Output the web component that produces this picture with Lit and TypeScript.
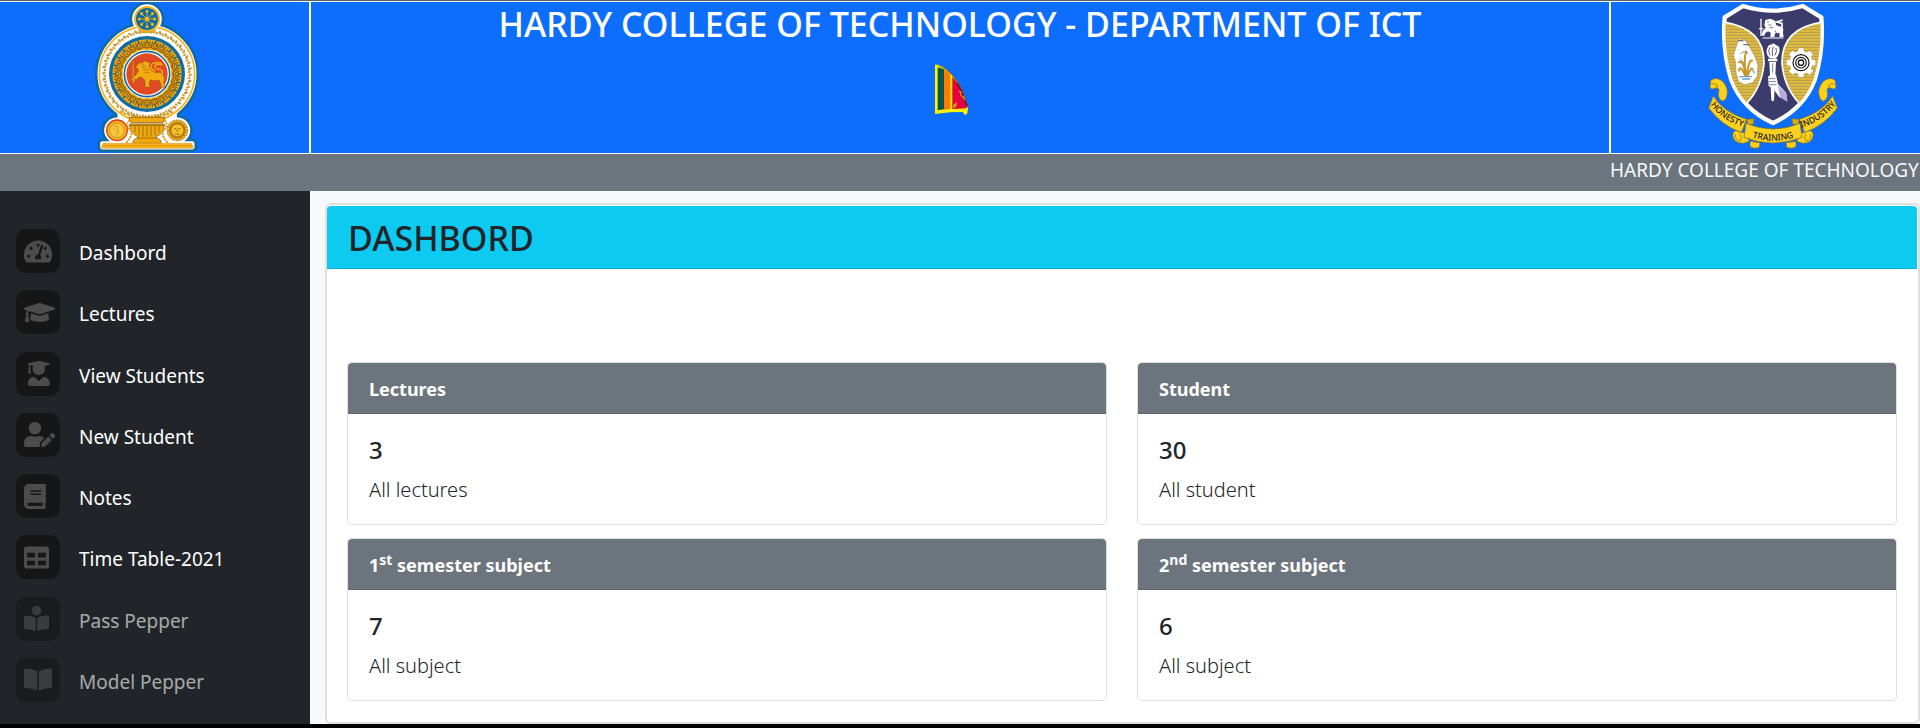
import { LitElement, html, svg, css, type TemplateResult } from "lit";
import { customElement, property } from "lit/decorators.js";
import { classMap } from "lit/directives/class-map.js";

interface NavItem {
  label: string;
  iconWidth: number;
  boxWidth?: number;
  icon: string;
  disabled?: boolean;
}

const NAV: NavItem[] = [
  {
    label: "Dashbord",
    iconWidth: 576,
    icon: "M288 32C128.94 32 0 160.94 0 320c0 52.8 14.25 102.26 39.06 144.8 5.61 9.62 16.3 15.2 27.44 15.2h443c11.14 0 21.83-5.58 27.44-15.2C561.75 422.26 576 372.8 576 320c0-159.06-128.94-288-288-288zm0 64c14.71 0 26.58 10.13 30.32 23.65-1.11 2.26-2.64 4.23-3.45 6.67l-9.22 27.67c-5.13 3.49-10.97 6.01-17.64 6.01-17.67 0-32-14.33-32-32S270.33 96 288 96zM96 384c-17.67 0-32-14.33-32-32s14.33-32 32-32 32 14.33 32 32-14.33 32-32 32zm48-160c-17.67 0-32-14.33-32-32s14.33-32 32-32 32 14.33 32 32-14.33 32-32 32zm246.77-72.41l-61.33 184C343.13 347.33 352 364.54 352 384c0 11.72-3.38 22.55-8.88 32H232.88c-5.5-9.45-8.88-20.28-8.88-32 0-33.94 26.5-61.43 59.9-63.59l61.34-184.01c4.17-12.56 17.73-19.45 30.36-15.17 12.57 4.19 19.35 17.79 15.17 30.36zm14.66 57.2l15.52-46.55c3.47-1.29 7.13-2.23 11.05-2.23 17.67 0 32 14.33 32 32s-14.33 32-32 32c-11.38-.01-20.89-6.28-26.57-15.22zM480 384c-17.67 0-32-14.33-32-32s14.33-32 32-32 32 14.33 32 32-14.33 32-32 32z",
  },
  {
    label: "Lectures",
    iconWidth: 640,
    icon: "M622.34 153.2L343.4 67.5c-15.2-4.67-31.6-4.67-46.79 0L17.66 153.2c-23.54 7.23-23.54 38.36 0 45.59l48.63 14.94c-10.67 13.19-17.23 29.28-17.88 46.9C38.78 266.15 32 276.11 32 288c0 10.78 5.68 19.85 13.86 25.65L20.33 428.53C18.11 438.52 25.71 448 35.94 448h56.11c10.24 0 17.84-9.48 15.62-19.47L82.14 313.65C90.32 307.85 96 298.78 96 288c0-11.57-6.47-21.25-15.66-26.87.76-15.02 8.44-28.3 20.69-36.72L296.6 284.5c9.06 2.78 26.44 6.25 46.79 0l278.95-85.7c23.55-7.24 23.55-38.36 0-45.6zM352.79 315.09c-28.53 8.76-52.84 3.92-65.59 0l-145.02-44.55L128 384c0 35.35 85.96 64 192 64s192-28.65 192-64l-14.18-113.47-145.03 44.56z",
  },
  {
    label: "View Students",
    iconWidth: 448,
    boxWidth: 608,
    icon: "M319.4 320.6L224 416l-95.4-95.4C57.1 323.7 0 382.2 0 454.4v9.6c0 26.5 21.5 48 48 48h352c26.5 0 48-21.5 48-48v-9.6c0-72.2-57.1-130.7-128.6-133.8zM13.6 79.8l6.4 1.5v58.4c-7 4.2-12 11.5-12 20.3 0 8.4 4.6 15.4 11.1 19.7L3.5 242c-1.7 6.9 2.1 14 7.6 14h41.8c5.5 0 9.3-7.1 7.6-14l-15.6-62.3C51.4 175.4 56 168.4 56 160c0-8.8-5-16.1-12-20.3V87.1l66 15.9c-8.6 17.2-14 36.4-14 57 0 70.7 57.3 128 128 128s128-57.3 128-128c0-20.6-5.3-39.8-14-57l96.3-23.2c18.2-4.4 18.2-27.1 0-31.5l-190.4-46c-13-3.1-26.7-3.1-39.7 0L13.6 48.2c-18.1 4.4-18.1 27.2 0 31.6z",
  },
  {
    label: "New Student",
    iconWidth: 640,
    icon: "M224 256c70.7 0 128-57.3 128-128S294.7 0 224 0 96 57.3 96 128s57.3 128 128 128zm89.6 32h-16.7c-22.2 10.2-46.9 16-72.9 16s-50.6-5.8-72.9-16h-16.7C60.2 288 0 348.2 0 422.4V464c0 26.5 21.5 48 48 48h274.9c-2.4-6.8-3.4-14-2.6-21.3l6.8-60.9 1.2-11.1 7.9-7.9 77.3-77.3c-24.5-27.7-60-45.5-99.9-45.5zm45.3 145.3l-6.8 61c-1.1 10.2 7.5 18.8 17.6 17.6l60.9-6.8 137.9-137.9-71.7-71.7-137.9 137.8zM633 268.9L595.1 231c-9.3-9.3-24.5-9.3-33.8 0l-37.8 37.8-4.1 4.1 71.8 71.7 41.8-41.8c9.3-9.4 9.3-24.5 0-33.9z",
  },
  {
    label: "Notes",
    iconWidth: 448,
    icon: "M448 360V24c0-13.3-10.7-24-24-24H96C43 0 0 43 0 96v320c0 53 43 96 96 96h328c13.3 0 24-10.7 24-24v-16c0-7.5-3.5-14.3-8.9-18.7-4.2-15.4-4.2-59.3 0-74.7 5.4-4.3 8.9-11.1 8.9-18.6zM128 134c0-3.3 2.7-6 6-6h212c3.3 0 6 2.7 6 6v20c0 3.3-2.7 6-6 6H134c-3.3 0-6-2.7-6-6v-20zm0 64c0-3.3 2.7-6 6-6h212c3.3 0 6 2.7 6 6v20c0 3.3-2.7 6-6 6H134c-3.3 0-6-2.7-6-6v-20zm253.4 250H96c-17.7 0-32-14.3-32-32 0-17.6 14.4-32 32-32h285.4c-1.9 17.1-1.9 46.9 0 64z",
  },
  {
    label: "Time Table-2021",
    iconWidth: 512,
    icon: "M464 32H48C21.49 32 0 53.49 0 80v352c0 26.51 21.49 48 48 48h416c26.51 0 48-21.49 48-48V80c0-26.51-21.49-48-48-48zM224 416H64v-96h160v96zm0-160H64v-96h160v96zm224 160H288v-96h160v96zm0-160H288v-96h160v96z",
  },
  {
    label: "Pass Pepper",
    iconWidth: 512,
    disabled: true,
    icon: "M352 96c0-53.02-42.98-96-96-96s-96 42.98-96 96 42.98 96 96 96 96-42.98 96-96zM233.59 241.1c-59.33-36.32-155.43-46.3-203.79-49.05C13.55 191.13 0 203.51 0 219.14v222.8c0 14.33 11.59 26.28 26.49 27.05 43.66 2.29 131.99 10.68 193.04 41.43 9.37 4.72 20.48-1.71 20.48-11.87V252.56c-.01-4.67-2.32-8.95-6.42-11.46zm248.61-49.05c-48.35 2.74-144.46 12.73-203.78 49.05-4.1 2.51-6.41 6.96-6.41 11.63v245.79c0 10.19 11.14 16.63 20.54 11.9 61.04-30.72 149.32-39.11 192.97-41.4 14.9-.78 26.49-12.73 26.49-27.06V219.14c-.01-15.63-13.56-28.01-29.81-27.09z",
  },
  {
    label: "Model Pepper",
    iconWidth: 576,
    disabled: true,
    icon: "M542.22 32.05c-54.8 3.11-163.72 14.43-230.96 55.59-4.64 2.84-7.27 7.89-7.27 13.17v363.87c0 11.55 12.63 18.85 23.28 13.49 69.18-34.82 169.23-44.32 218.7-46.92 16.89-.89 30.02-14.43 30.02-30.66V62.75c.01-17.71-15.35-31.74-33.77-30.7zM264.73 87.64C197.5 46.48 88.58 35.17 33.78 32.05 15.36 31.01 0 45.04 0 62.75V400.6c0 16.24 13.13 29.78 30.02 30.66 49.49 2.6 149.59 12.11 218.77 46.95 10.62 5.35 23.21-1.94 23.21-13.46V100.63c0-5.29-2.62-10.14-7.27-12.99z",
  },
];

const spin = (count: number, cx: number, cy: number, draw: (i: number) => unknown) =>
  Array.from({ length: count }, (_, i) => svg`<g transform="rotate(${(360 / count) * i} ${cx} ${cy})">${draw(i)}</g>`);

@customElement("state-emblem")
export class StateEmblem extends LitElement {
  static styles = css`
    :host { display: block; }
    svg { display: block; width: 104px; height: 151px; }
  `;

  private silhouette() {
    return svg`
      <circle cx="202" cy="222" r="142"/>
      <circle cx="202" cy="57" r="38"/>
      <circle cx="112" cy="391" r="32"/>
      <circle cx="293" cy="391" r="32"/>
      <path d="M120 330H285V430H120zM68 430H338V442H68z"/>`;
  }

  render() {
    return html`
      <svg viewBox="46 6 312 453" role="img" aria-label="Emblem of Sri Lanka">
        <g fill="#0f6ca3" stroke="#0f6ca3" stroke-width="30" stroke-linejoin="round">${this.silhouette()}</g>
        <g fill="#fff" stroke="#fff" stroke-width="13" stroke-linejoin="round">${this.silhouette()}</g>
        <circle cx="202" cy="222" r="143" fill="#fff" stroke="#f5b31c" stroke-width="5"/>
        <path d="M158 92L202 80 246 92 240 112H164z" fill="#fff"/>
        ${spin(44, 202, 222, (i) => svg`
          <path d="M202 86q9 3 7 12q-10 1-7-12z" fill="${i % 2 ? "#d99b1a" : "#b98a35"}"/>
          <path d="M199 101q-8-2-6-10q8 1 6 10z" fill="#c99a3c"/>
          <path d="M196 94q6-5 12-2" fill="none" stroke="#c9a45c" stroke-width="2"/>`)}
        <circle cx="202" cy="222" r="117" fill="#fff"/>
        <circle cx="202" cy="222" r="114" fill="#0f6ca3"/>
        <circle cx="202" cy="222" r="104" fill="#f2ac12"/>
        ${spin(24, 202, 222, () => svg`
          <path d="M193 122V140Q202 150 211 140V122M197 126V136Q202 141 207 136V126" fill="none" stroke="#6d4a0c" stroke-width="2.4"/>
          <path d="M202 119V131" stroke="#175d80" stroke-width="4"/>`)}
        <circle cx="202" cy="222" r="80" fill="none" stroke="#7a5410" stroke-width="2"/>
        <circle cx="202" cy="222" r="73" fill="#fff"/>
        <circle cx="202" cy="222" r="68" fill="#fff" stroke="#0f6ca3" stroke-width="5"/>
        <circle cx="202" cy="222" r="62" fill="#e04a24"/>
        <path d="M158 178l4 0 1 58 6 3-5 4v7h-5v-8l-6-3 5-3z" fill="#f2ac12" stroke="#7a4a0a" stroke-width="1"/>
        <path d="M173 196l6-8 9 1 6-6 10 2 7 5-3 9 7 12 12 7 14-1 9 7 5 12-3 11 4 11-1 4-12-1 1-8-6-12-14 1-12-2-4 11 2 8-3 3-13-1 3-6-2-14-8-9-11 1-6 6-9-2-2-8 8-2 4-7 6-7-3-8-7-1z" fill="#f2ac12" stroke="#8a4c0c" stroke-width="1.4"/>
        <path d="M245 224c9-8 0-16-10-17s-14-9-4-14l18 1-10-6-18 1c-13 8-8 20 6 24" fill="none" stroke="#f2ac12" stroke-width="4"/>
        <path d="M187 193h7m-8 8h14m-10 8h17m-12 8h14" stroke="#8a4c0c" stroke-width="1.6"/>

        <circle cx="202" cy="57" r="41" fill="#fff"/>
        <circle cx="202" cy="57" r="36" fill="#0f6ca3" stroke="#f5b31c" stroke-width="6"/>
        ${spin(8, 202, 57, () => svg`<path d="M202 57V35" stroke="#f2b51c" stroke-width="2.5"/><circle cx="202" cy="34" r="4.5" fill="#f2b51c"/>`)}
        <circle cx="202" cy="57" r="7" fill="#f2b51c"/>
        <path d="M176 88Q202 104 228 88L222 98H182z" fill="#f2b51c" stroke="#a87412"/>

        <path d="M120 334Q200 372 284 334" fill="none" stroke="#d99b1a" stroke-width="6" stroke-dasharray="9 3"/>
        <path d="M148 352H256L250 368H154zM150 372H254Q254 402 228 410L244 422V430H160V422L176 410Q150 402 150 372z" fill="#efa90f" stroke="#7a5410" stroke-width="2"/>
        <path d="M148 376H256M166 378V398M178 378V406M190 378V409M202 378V409M214 378V409M226 378V406M238 378V398M172 414H232" stroke="#7a5410" stroke-width="2"/>
        <path d="M150 360q-14 14 0 28t-10 40M254 360q14 14 0 28t10 40" fill="none" stroke="#d99b1a" stroke-width="6" stroke-dasharray="6 3"/>
        <circle cx="112" cy="391" r="31" fill="#f2b51c" stroke="#dc3d1e" stroke-width="4"/>
        <circle cx="112" cy="391" r="22" fill="#f7c63c" stroke="#b98318" stroke-width="2"/>
        <path d="M102 380q8-7 12 0t-2 12q8 2-2 14M103 388h5" fill="none" stroke="#b98318" stroke-width="2"/>
        <circle cx="293" cy="391" r="31" fill="#f2b51c" stroke="#8a5c0e" stroke-width="3" stroke-dasharray="4 3"/>
        ${spin(20, 293, 391, () => svg`<path d="M289 372L293 362 297 372z" fill="#a46c10"/>`)}
        <circle cx="293" cy="391" r="19" fill="#f7c02c" stroke="#8a5c0e" stroke-width="1.5"/>
        <path d="M283 386h7m6 0h7M293 388v8M286 401q7 5 14 0" fill="none" stroke="#6d4a0c" stroke-width="2"/>
        <path d="M70 430H336L341 445H64z" fill="#f7b01a" stroke="#c98a12" stroke-width="1"/>
        <path d="M68 437H338" stroke="#d49212" stroke-width="2"/>
      </svg>`;
  }
}

@customElement("college-crest")
export class CollegeCrest extends LitElement {
  static styles = css`
    :host { display: block; }
    svg { display: block; width: 134px; height: 151px; }
    .motto { font: 500 26px "Noto Sans", sans-serif; fill: #1b1b22; }
  `;

  private half() {
    return svg`
      <path d="M60 242Q75 228 96 244Q118 268 106 296L96 304Q80 296 84 276Q88 262 74 264Q60 272 58 260z" fill="#fbd01e" stroke="#7d6a20" stroke-width="2"/>
      <path d="M62 254Q68 246 78 254Q84 262 74 266" fill="none" stroke="#7d6a20" stroke-width="2"/>
      <path d="M68 288Q100 338 168 358L152 398Q92 376 54 324z" fill="#fbd01e" stroke="#7d6a20" stroke-width="2"/>
      <path d="M168 358L190 356 188 372 172 376z" fill="#d9ab14" stroke="#7d6a20" stroke-width="2"/>
      <path d="M152 398Q130 384 126 404Q128 430 158 430L176 424 164 398z" fill="#fbd01e" stroke="#7d6a20" stroke-width="2"/>
      <path d="M134 402Q132 420 148 424Q156 414 148 402" fill="none" stroke="#7d6a20" stroke-width="2"/>
      <path d="M178 424L208 428 206 442Q192 448 178 440z" fill="#fbd01e" stroke="#7d6a20" stroke-width="2"/>`;
  }

  render() {
    return html`
      <svg viewBox="46 6 402 453" role="img" aria-label="Hardy College crest">
        <defs>
          <pattern id="stripes" width="20" height="9" patternUnits="userSpaceOnUse">
            <path d="M0 0H20V9H0z" fill="#e3bb3c"/>
            <path d="M0 7H20" stroke="#a5965c" stroke-width="2.5"/>
          </pattern>
          <clipPath id="shield"><path d="M157 18Q247 46 336 18L392 52Q400 150 372 240Q338 328 247 369Q156 328 122 240Q94 150 102 52z"/></clipPath>
          <path id="left" d="M60 314Q92 360 160 382"/>
          <path id="mid" d="M166 406Q247 438 328 406"/>
          <path id="right" d="M330 384Q398 362 436 312"/>
        </defs>
        <path d="M157 18Q247 46 336 18L392 52Q400 150 372 240Q338 328 247 369Q156 328 122 240Q94 150 102 52z" fill="#3b3c6c" stroke="#fff" stroke-width="13" stroke-linejoin="round"/>
        <g clip-path="url(#shield)">
          <path d="M96 66Q222 84 220 190Q214 262 166 312L80 300z" fill="url(#stripes)" stroke="#fff" stroke-width="5"/>
          <path d="M398 66Q272 84 274 190Q280 262 328 312L414 300z" fill="url(#stripes)" stroke="#fff" stroke-width="5"/>
          <path d="M157 18Q247 46 336 18L392 52Q400 150 372 240Q338 328 247 369Q156 328 122 240Q94 150 102 52z" fill="none" stroke="#fff" stroke-width="8"/>
        </g>

        <path d="M146 112l8 12 10-4 16 26 12 22 10 28-2 32-14 20-24 6-18-8-8-28-2-34-6-18 8-24z" fill="#fff" stroke="#9a9070" stroke-width="2"/>
        <path d="M142 122h14m2 12h18" stroke="#6e6e80" stroke-width="4"/>
        <path d="M164 228Q160 176 142 188M166 228Q158 168 168 152M168 228Q176 170 186 184M164 228Q148 190 144 214M170 228Q184 196 186 210" fill="none" stroke="#c9982c" stroke-width="6"/>
        <path d="M150 162q10-14 24 0m-26 16l12 10" fill="none" stroke="#6b7086" stroke-width="2.5"/>
        <path d="M146 230h38m-30 7h24m8-26l6 8" stroke="#6d9cc4" stroke-width="4"/>

        ${spin(8, 331, 188, () => svg`<path d="M321 158L323 144H339L341 158z" fill="#fff" stroke="#8e8350" stroke-width="1"/>`)}
        <circle cx="331" cy="188" r="34" fill="#fff"/>
        <circle cx="331" cy="188" r="24" fill="none" stroke="#15151c" stroke-width="3.5"/>
        <circle cx="331" cy="188" r="16" fill="none" stroke="#15151c" stroke-width="3.5"/>
        <circle cx="331" cy="188" r="8" fill="none" stroke="#15151c" stroke-width="4"/>

        <path d="M209 56h4v52h-4zM205 84h13v4h-13z" fill="#fff"/>
        <path d="M221 76l3-16 15-4 14 6 4 14 14 4 7 8-1 12 2 11h-13l1-12-14 1-2 11h-12l1-13-8-4-9 6-2 8-8-2 3-14 9-8z" fill="#fff"/>
        <path d="M274 92V70L258 66 276 60" fill="none" stroke="#fff" stroke-width="5"/>
        <path d="M229 66h6m-2 9h10m-7 8h12m5 8l4 8" stroke="#3b3c6c" stroke-width="2"/>
        <path d="M216 114H278" stroke="#fff" stroke-width="3"/>

        <path d="M236 174Q222 158 231 142Q234 132 242 134Q250 126 256 136Q270 138 266 156Q264 168 254 176z" fill="#fff"/>
        <path d="M238 166Q230 152 238 142M246 168Q242 152 248 140M253 166Q260 154 256 144" fill="none" stroke="#3b3c6c" stroke-width="2.5"/>
        <path d="M232 176H260V184H232zM236 186H256L250 300Q246 308 242 300z" fill="#fff"/>
        <path d="M232 230Q238 222 256 224L262 252 286 278 290 300 266 292 248 266 234 258z" fill="#fff"/>
        <path d="M262 256L288 282 290 306 268 292z" fill="#b7a8dd"/>
        <path d="M234 236h20m-20 9h22m-20 9h22M246 190v28" stroke="#3b3c6c" stroke-width="2"/>

        ${this.half()}
        <g transform="translate(494 0) scale(-1 1)">${this.half()}</g>
        <path d="M166 370Q247 404 328 370L334 412Q247 446 160 412z" fill="#fbd01e" stroke="#7d6a20" stroke-width="2"/>
        <text class="motto"><textPath href="#left">HONESTY</textPath></text>
        <text class="motto"><textPath href="#mid" startOffset="50%" text-anchor="middle">TRAINING</textPath></text>
        <text class="motto"><textPath href="#right" startOffset="100%" text-anchor="end">INDUSTRY</textPath></text>
      </svg>`;
  }
}

@customElement("waving-flag")
export class WavingFlag extends LitElement {
  static styles = css`
    :host { display: block; }
    svg { display: block; width: 50px; height: 52px; }
  `;

  render() {
    return html`
      <svg viewBox="45 28 150 156" role="img" aria-label="Flag of Sri Lanka">
        <path d="M45 30L56 30Q78 38 94 58Q118 84 132 118L144 162L142 176L136 182L128 172L90 173L45 178z" fill="#fff200"/>
        <path d="M53 38L72 44V164L53 167z" fill="#06574a"/>
        <path d="M72 43Q84 50 91 60V163L72 165z" fill="#ff7a00"/>
        <path d="M97 66Q120 90 130 122L140 161L97 163z" fill="#e5003f"/>
        <path d="M56 32Q78 40 96 60Q118 84 132 120" fill="none" stroke="#5f5a24" stroke-width="3"/>
        <path d="M110 86Q124 104 134 134L141 156" fill="none" stroke="#8a0a2a" stroke-width="6"/>
        <path d="M116 108l8 4-2 12 10 2 2 12M99 160l4-12 7-4-2 10-5 4z" fill="#d4b400" stroke="#c9a800" stroke-width="2"/>
      </svg>`;
  }
}

@customElement("stat-card")
export class StatCard extends LitElement {
  static styles = css`
    :host { display: block; background: #fff; border: 1px solid #dfdfdf; border-radius: 5px; overflow: hidden; }
    .label { margin: 0; padding: 2px 21px 0; background: #6c757d; border-bottom: 1px solid #5f666d; color: #fff; font-size: 18px; font-weight: 700; line-height: 48px; }
    .label sup { font-size: 14px; line-height: 0; }
    .body { padding: 21px 21px 19px; }
    .value { margin: 0 0 10px; font-size: 24px; font-weight: 500; line-height: 30px; }
    .caption { margin: 0; font-size: 20px; font-weight: 300; line-height: 30px; }
  `;

  @property({ attribute: false }) label: TemplateResult | string = "";
  @property({ type: Number }) value = 0;
  @property() caption = "";

  render() {
    return html`
      <h2 class="label">${this.label}</h2>
      <div class="body">
        <p class="value">${this.value}</p>
        <p class="caption">${this.caption}</p>
      </div>`;
  }
}

@customElement("app-root")
export class AppRoot extends LitElement {
  static styles = css`
    :host {
      display: flex;
      flex-direction: column;
      min-height: 100vh;
      box-sizing: border-box;
      border-bottom: 4px solid #000;
      background: #f8f9fa;
      color: #212529;
      font-family: "Noto Sans", "Open Sans", sans-serif;
    }
    .banner {
      display: grid;
      grid-template-columns: 309px 1fr 309px;
      gap: 2px;
      padding: 1px 0;
      border-top: 1px solid #5c636a;
      background: #fff;
    }
    .cell { display: flex; flex-direction: column; align-items: center; background: #0d6efd; }
    .cell.start { padding-right: 15px; }
    .cell.end { padding-left: 14px; }
    .title { margin: 0 0 18px; color: #fff; font-size: 34px; font-weight: 500; line-height: 44px; text-align: center; }
    .ticker { display: flex; justify-content: flex-end; padding-bottom: 5px; background: #6c757d; color: #f8f9fa; font-size: 19px; line-height: 32px; }
    .ticker-text { width: 310px; overflow: hidden; white-space: nowrap; }
    .shell { display: flex; flex: 1; }
    .sidebar {
      display: flex;
      flex-direction: column;
      justify-content: space-between;
      flex: 0 0 310px;
      box-sizing: border-box;
      padding: 38px 16px 22px;
      background: #212529;
    }
    .link { display: flex; align-items: center; gap: 19px; color: #fff; font-size: 19px; text-decoration: none; }
    .link.disabled { opacity: 0.6; }
    .tile { display: flex; align-items: center; box-sizing: border-box; width: 44px; height: 44px; padding-left: 8px; border-radius: 10px; background: #161616; }
    .tile svg { display: block; flex: none; height: 25px; fill: #4c4c4c; }
    .text { padding-top: 4px; line-height: 28px; }
    .main { flex: 1; min-width: 0; padding: 12px 0 0 15px; }
    .panel { padding-top: 1px; border: 2px solid #dfdfdf; border-radius: 6px; background: #fff; }
    .heading { margin: 0 1px 0 0; padding: 2px 21px 0; border-bottom: 1px solid #0cb3d3; border-radius: 4px 4px 0 0; background: #0dcaf0; font-size: 34px; font-weight: 500; line-height: 60px; }
    .stats { display: grid; grid-template-columns: 1fr 1fr; gap: 13px 30px; padding: 93px 21px 21px 20px; }
  `;

  render() {
    return html`
      <header class="banner">
        <div class="cell start"><state-emblem></state-emblem></div>
        <div class="cell">
          <h1 class="title">HARDY COLLEGE OF TECHNOLOGY - DEPARTMENT OF ICT</h1>
          <waving-flag></waving-flag>
        </div>
        <div class="cell end"><college-crest></college-crest></div>
      </header>
      <div class="ticker"><div class="ticker-text">HARDY COLLEGE OF TECHNOLOGY</div></div>
      <div class="shell">
        <nav class="sidebar" aria-label="Main">
          ${NAV.map((item) => html`
            <a class=${classMap({ link: true, disabled: !!item.disabled })} href="#" aria-disabled=${item.disabled ? "true" : "false"}>
              <span class="tile">
                <svg viewBox="${((item.iconWidth - (item.boxWidth ?? item.iconWidth)) / 2)} 0 ${item.boxWidth ?? item.iconWidth} 512" aria-hidden="true"><path d=${item.icon}></path></svg>
              </span>
              <span class="text">${item.label}</span>
            </a>`)}
        </nav>
        <main class="main">
          <section class="panel">
            <h1 class="heading">DASHBORD</h1>
            <div class="stats">
              <stat-card .label=${"Lectures"} .value=${3} caption="All lectures"></stat-card>
              <stat-card .label=${"Student"} .value=${30} caption="All student"></stat-card>
              <stat-card .label=${html`1<sup>st</sup> semester subject`} .value=${7} caption="All subject"></stat-card>
              <stat-card .label=${html`2<sup>nd</sup> semester subject`} .value=${6} caption="All subject"></stat-card>
            </div>
          </section>
        </main>
      </div>`;
  }
}
